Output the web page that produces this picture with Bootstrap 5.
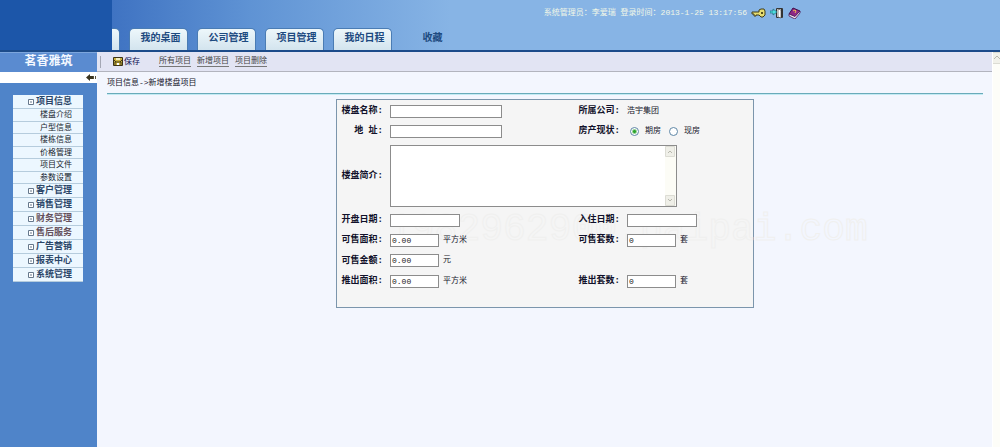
<!DOCTYPE html>
<html lang="zh-CN">
<head>
<meta charset="utf-8">
<meta name="viewport" content="width=device-width, initial-scale=1">
<title>茗香雅筑 - 新增楼盘项目</title>
<link href="https://cdn.jsdelivr.net/npm/bootstrap@5.3.0/dist/css/bootstrap.min.css" rel="stylesheet">
<style>
body{font-family:"Liberation Mono","Noto Sans CJK SC",monospace;font-size:8px;line-height:12px;color:#15152c;background:#f3f6fe}
svg{display:block;flex:none}
a{color:inherit;text-decoration:none}
.topbar{height:52px;background:linear-gradient(90deg,#3f73c2 112px,#5f93d4 250px,#87b4e5 450px);border-bottom:2px solid #1c4b8a}
.brand-block{width:112px;background:#1c56a9}
.user-line{color:#f1f7e8;padding:7px 199px 0 0}
.tab-row{gap:9px;font-size:10px;font-weight:700}
.tab-item{width:59px;height:22px;line-height:20px;padding-left:4px;text-align:center;color:#1d4a80;border:1px solid #4a7cb4;border-bottom:0;border-radius:5px 5px 0 0;background:linear-gradient(#edf7fb,#d3e4ee)}
.tab-stub{width:8px;border-left:0;border-radius:0 5px 0 0;padding:0}
.tab-plain{background:none;border-color:transparent}
.side{width:97px;background:#4f84c9}
.side-title{height:20px;line-height:19px;font-size:12px;color:#f4f8ff;background:#5a8bd0;border-top:1px solid #7da6dc}
.side-strip{height:11px;background:#fff}
.side-menu{margin:12px 14px 0 13px}
.menu-head,.menu-sub a{background:#ecf7ff;border-bottom:1px solid #b5ccdd;padding-right:11px}
.menu-head{height:14px;font-size:9px;font-weight:700;color:#2b4668;gap:2px}
.menu-head.warm{color:#66515c}
.menu-sub{height:75px;display:grid;grid-auto-rows:1fr;line-height:11px}
.menu-sub a{color:#151c2c}
.tools{height:20px;background:#e2e4f3;border-bottom:1px solid #b2b4be;padding-left:3px}
.grip{width:1px;height:12px;background:#a4a7b4}
.save-btn{border:0;background:none;padding:0;margin:0 19px 0 12px;gap:1px;color:#0c0c50}
.tools a{color:#444;border-bottom:1px solid #777;line-height:10px;margin-right:6px}
.scroll-rail{width:8px;background:#fdfdf8;border-left:1px solid #fff}
.crumb{padding:5px 0 4px}
.work{padding:0 9px 0 10px}
.rule{border-top:1px solid #69abba;border-bottom:1px solid #c4eaf3}
.panel-box{max-width:418px;margin:4px auto 0;border:1px solid #7b95ac;background:#f5f5f5;padding:1px 0 16px;display:grid;grid-template-columns:46px 173px 50px 1fr;column-gap:7px;grid-template-rows:20px 20px 69px 20px 20px 21px 20px;align-items:center}
.panel-box>*{position:relative;z-index:1}
.cap{font-size:9px;font-weight:700;display:flex;justify-content:flex-end;white-space:pre;color:#11112a}
.fld{height:13px;border:1px solid #8c8c8c;background:#fff;padding:0 1px;font-size:8px;line-height:11px;border-radius:0;color:#222}
.w-long{width:112px}.w-date{width:70px}.w-num{width:49px}
.unit{margin-left:4px}
.col-a{grid-column:1}
.memo{grid-column:2/5;width:287px;height:62px;border:1px solid #8c8c8c;background:#fff}
.memo textarea{border:0;resize:none;padding:1px;outline:0;overflow:hidden}
.memo-rail{width:11px;background:#fcfcf6}
.choices{padding-left:3px;gap:8px}
.choices>span{gap:6px}
.dot{appearance:none;width:9px;height:9px;margin:0;border:1px solid #5f87a6;border-radius:50%;background:#fff}
.dot:checked{background:radial-gradient(#2ca42c 0 1px,#fff 3px)}
.ghost{position:absolute;z-index:0;left:389px;top:208px;font-size:38px;line-height:44px;white-space:nowrap;color:transparent;-webkit-text-stroke:1px #f0f0ef;pointer-events:none}
</style>
</head>
<body class="d-flex flex-column min-vh-100">
<header class="topbar d-flex">
  <div class="brand-block"></div>
  <div class="flex-grow-1 d-flex flex-column justify-content-between">
    <div class="user-line d-flex justify-content-end align-items-center">
      <span>系统管理员：李爱瑞 登录时间：2013-1-25 13:17:56</span>
      <a href="#" class="ms-1" aria-label="修改密码"><svg width="15" height="12" viewBox="0 0 15 12"><path d="M1 5h7V3l2-1h3l1 2v4l-2 2h-2L8 8H5v1H3V7H1z" fill="#e5dc70" stroke="#403c18"/><path d="M10 5h2v2h-2z" fill="#585020"/></svg></a>
      <a href="#" class="ms-1" aria-label="退出"><svg width="14" height="12" viewBox="0 0 14 12"><path d="M6.500 1.500h6v9h-6z" fill="#f5f5ef" stroke="#333"/><path d="M8 2l3 1v8l-3-1z" fill="#fff" stroke="#555" stroke-width=".7"/><path d="M11 2h1v8h-1z" fill="#333"/><path d="M0 4h3V2l4 3-4 3V6H0z" fill="#50e0e0" stroke="#1b6d7d" stroke-width=".7"/></svg></a>
      <a href="#" class="ms-1" aria-label="帮助"><svg width="13" height="12" viewBox="0 0 13 12"><path d="M5 1l7 3-5 6-6-3z" fill="#8e2786" stroke="#3f1049"/><path d="M1 7v2l6 3 5-6V4L7 9.500z" fill="#efe6ef" stroke="#4b1554" stroke-width=".8"/><path d="M5 4l2-1 1 1-1 2" fill="none" stroke="#f0b850"/></svg></a>
    </div>
    <nav class="tab-row d-flex">
      <span class="tab-item tab-stub"></span>
      <a href="#" class="tab-item">我的桌面</a>
      <a href="#" class="tab-item">公司管理</a>
      <a href="#" class="tab-item">项目管理</a>
      <a href="#" class="tab-item">我的日程</a>
      <a href="#" class="tab-item tab-plain">收藏</a>
    </nav>
  </div>
</header>
<div class="d-flex flex-grow-1">
  <aside class="side flex-shrink-0">
    <div class="side-title text-center fw-bold">茗香雅筑</div>
    <div class="side-strip d-flex justify-content-end align-items-center"><svg width="12" height="9" viewBox="0 0 12 9"><path d="M1 4.500L5 1v2h3v3H5v2z" fill="#3a3520"/><path d="M8 3h1v3H8zM10 3h1v3h-1z" fill="#55503c"/></svg></div>
    <nav class="side-menu">
      <a href="#" class="menu-head d-flex justify-content-end align-items-center"><svg width="6" height="6"><path d="M.5.5h5v5h-5zM2 3h2" fill="#fff" stroke="#66788c"/></svg>项目信息</a>
      <div class="menu-sub text-end">
        <a href="#">楼盘介绍</a><a href="#">户型信息</a><a href="#">楼栋信息</a><a href="#">价格管理</a><a href="#">项目文件</a><a href="#">参数设置</a>
      </div>
      <a href="#" class="menu-head d-flex justify-content-end align-items-center"><svg width="6" height="6"><path d="M.5.5h5v5h-5zM2 3h2" fill="#fff" stroke="#66788c"/></svg>客户管理</a>
      <a href="#" class="menu-head d-flex justify-content-end align-items-center"><svg width="6" height="6"><path d="M.5.5h5v5h-5zM2 3h2" fill="#fff" stroke="#66788c"/></svg>销售管理</a>
      <a href="#" class="menu-head warm d-flex justify-content-end align-items-center"><svg width="6" height="6"><path d="M.5.5h5v5h-5zM2 3h2" fill="#fff" stroke="#66788c"/></svg>财务管理</a>
      <a href="#" class="menu-head warm d-flex justify-content-end align-items-center"><svg width="6" height="6"><path d="M.5.5h5v5h-5zM2 3h2" fill="#fff" stroke="#66788c"/></svg>售后服务</a>
      <a href="#" class="menu-head d-flex justify-content-end align-items-center"><svg width="6" height="6"><path d="M.5.5h5v5h-5zM2 3h2" fill="#fff" stroke="#66788c"/></svg>广告营销</a>
      <a href="#" class="menu-head d-flex justify-content-end align-items-center"><svg width="6" height="6"><path d="M.5.5h5v5h-5zM2 3h2" fill="#fff" stroke="#66788c"/></svg>报表中心</a>
      <a href="#" class="menu-head d-flex justify-content-end align-items-center"><svg width="6" height="6"><path d="M.5.5h5v5h-5zM2 3h2" fill="#fff" stroke="#66788c"/></svg>系统管理</a>
    </nav>
  </aside>
  <main class="flex-grow-1">
    <div class="tools d-flex align-items-center">
      <span class="grip"></span>
      <button type="submit" form="project" class="save-btn d-flex align-items-center"><svg width="10" height="9" viewBox="0 0 10 9"><path d="M.5.5h9v8h-9z" fill="#c9b03c" stroke="#3a3218"/><path d="M3 1h4v2H3z" fill="#f2eec0"/><path d="M2 8V5h6v3M1 3l2 2M9 3L7 5" fill="none" stroke="#453c18"/><path d="M4 6h2v2H4z" fill="#fff"/></svg>保存</button>
      <a href="#">所有项目</a><a href="#">新增项目</a><a href="#">项目删除</a>
    </div>
    <div class="work">
      <div class="crumb">项目信息-&gt;新增楼盘项目</div>
      <div class="rule"></div>
      <form id="project" class="panel-box">
        <label class="cap" for="name">楼盘名称:</label>
        <div class="d-flex"><input id="name" type="text" class="fld w-long"></div>
        <span class="cap">所属公司:</span><span>浩宇集团</span>

        <label class="cap" for="addr">地 址:</label>
        <div class="d-flex"><input id="addr" type="text" class="fld w-long"></div>
        <span class="cap">房产现状:</span>
        <div class="choices d-flex">
          <span class="d-flex align-items-center"><input class="dot" type="radio" name="state" id="s1" checked><label for="s1">期房</label></span>
          <span class="d-flex align-items-center"><input class="dot" type="radio" name="state" id="s2"><label for="s2">现房</label></span>
        </div>

        <label class="cap" for="memo">楼盘简介:</label>
        <div class="memo d-flex">
          <textarea id="memo" class="flex-grow-1"></textarea>
          <div class="memo-rail d-flex flex-column justify-content-between">
            <svg width="11" height="11"><path d="M.5.5h9v10h-9z" fill="#efefe8" stroke="#dcdcd4"/><path d="M3 7l2-2 2 2" fill="none" stroke="#b8b8ae"/></svg>
            <svg width="11" height="11"><path d="M.5.5h9v10h-9z" fill="#efefe8" stroke="#dcdcd4"/><path d="M3 4l2 2 2-2" fill="none" stroke="#b8b8ae"/></svg>
          </div>
        </div>

        <label class="cap" for="open">开盘日期:</label>
        <div class="d-flex"><input id="open" type="text" class="fld w-date"></div>
        <label class="cap" for="live">入住日期:</label>
        <div class="d-flex"><input id="live" type="text" class="fld w-date"></div>

        <label class="cap" for="area">可售面积:</label>
        <div class="d-flex"><input id="area" type="text" class="fld w-num" value="0.00"><span class="unit">平方米</span></div>
        <label class="cap" for="sets">可售套数:</label>
        <div class="d-flex"><input id="sets" type="text" class="fld w-num" value="0"><span class="unit">套</span></div>

        <label class="cap col-a" for="sum">可售金额:</label>
        <div class="d-flex"><input id="sum" type="text" class="fld w-num" value="0.00"><span class="unit">元</span></div>

        <label class="cap col-a" for="outarea">推出面积:</label>
        <div class="d-flex"><input id="outarea" type="text" class="fld w-num" value="0.00"><span class="unit">平方米</span></div>
        <label class="cap" for="outsets">推出套数:</label>
        <div class="d-flex"><input id="outsets" type="text" class="fld w-num" value="0"><span class="unit">套</span></div>
      </form>
    </div>
  </main>
  <div class="scroll-rail flex-shrink-0"><svg width="7" height="12"><path d="M0 .5h7M0 11.500h7" stroke="#dcdcd4"/><path d="M0 1h7v10H0z" fill="#f1f1ea"/><path d="M1 7l3-3 3 3" fill="none" stroke="#b8b8ae"/></svg></div>
</div>
<div class="ghost" aria-hidden="true">1982962900.paipai.com</div>
</body>
</html>
